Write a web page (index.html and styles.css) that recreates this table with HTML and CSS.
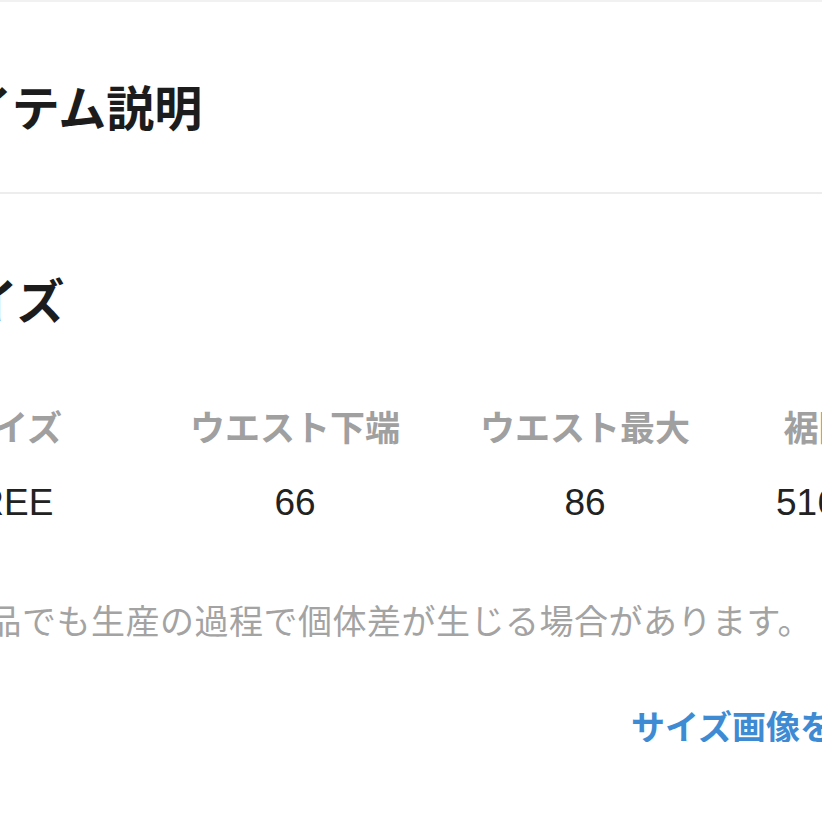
FILE: index.html
```html
<!DOCTYPE html>
<html lang="ja">
<head>
<meta charset="utf-8">
<title>アイテム説明</title>
<link rel="stylesheet" href="styles.css">
</head>
<body>
<div class="page">
  <div class="topline"></div>
  <section class="title-block">
    <h1 class="title">アイテム説明</h1>
  </section>
  <div class="sep"></div>
  <section class="size-block">
    <h2 class="size-title">サイズ</h2>
    <div class="size-table">
      <div class="th">サイズ</div>
      <div class="th">ウエスト下端</div>
      <div class="th">ウエスト最大</div>
      <div class="th">裾回り</div>
      <div class="td td-first">FREE</div>
      <div class="td">66</div>
      <div class="td">86</div>
      <div class="td td-last">516</div>
    </div>
    <p class="note">同じ商品でも生産の過程で個体差が生じる場合があります。</p>
    <div class="link-row"><a class="size-link" href="#">サイズ画像を見る</a></div>
  </section>
</div>
</body>
</html>
```

FILE: styles.css
```css
html, body {
  margin: 0;
  padding: 0;
  background: #ffffff;
  overflow: hidden;
}

body {
  font-family: "Noto Sans CJK JP", "Noto Sans", sans-serif;
  color: #1e1e1e;
}

.page {
  margin-left: -116px;
  width: 1030px;
}

.topline {
  height: 2px;
  background: #f1f1f1;
}

.title-block {
  padding: 79px 0 63px 35px;
}

.title {
  margin: 0;
  font-size: 48px;
  line-height: 48px;
  font-weight: 700;
  color: #1c1c1c;
}

.sep {
  height: 2px;
  background: #ededed;
}

.size-block {
  padding-top: 80px;
}

.size-title {
  margin: 0 0 0 38px;
  font-size: 48px;
  line-height: 48px;
  font-weight: 700;
  color: #1c1c1c;
}

.size-table {
  display: grid;
  grid-template-columns: 252px 318px 262px 240px;
  row-gap: 40px;
  margin-top: 86px;
  text-align: center;
}

.th {
  font-size: 35px;
  line-height: 35px;
  font-weight: 700;
  color: #a0a0a0;
  white-space: nowrap;
}

.td {
  font-family: "Liberation Sans", "Noto Sans CJK JP", sans-serif;
  font-size: 37px;
  line-height: 40px;
  color: #222222;
}

.td-first {
  padding-right: 12px;
}

.td-last {
  text-align: left;
  padding-left: 60px;
}

.note {
  margin: 80px 0 0 0;
  font-size: 34px;
  line-height: 34px;
  letter-spacing: 0.5px;
  font-weight: 400;
  color: #a3a3a3;
  white-space: nowrap;
}

.link-row {
  display: flex;
  justify-content: flex-end;
  margin-top: 73px;
  padding-right: 12px;
}

.size-link {
  font-size: 34px;
  line-height: 32px;
  font-weight: 700;
  color: #3f8bd3;
  text-decoration: none;
  white-space: nowrap;
}
```
